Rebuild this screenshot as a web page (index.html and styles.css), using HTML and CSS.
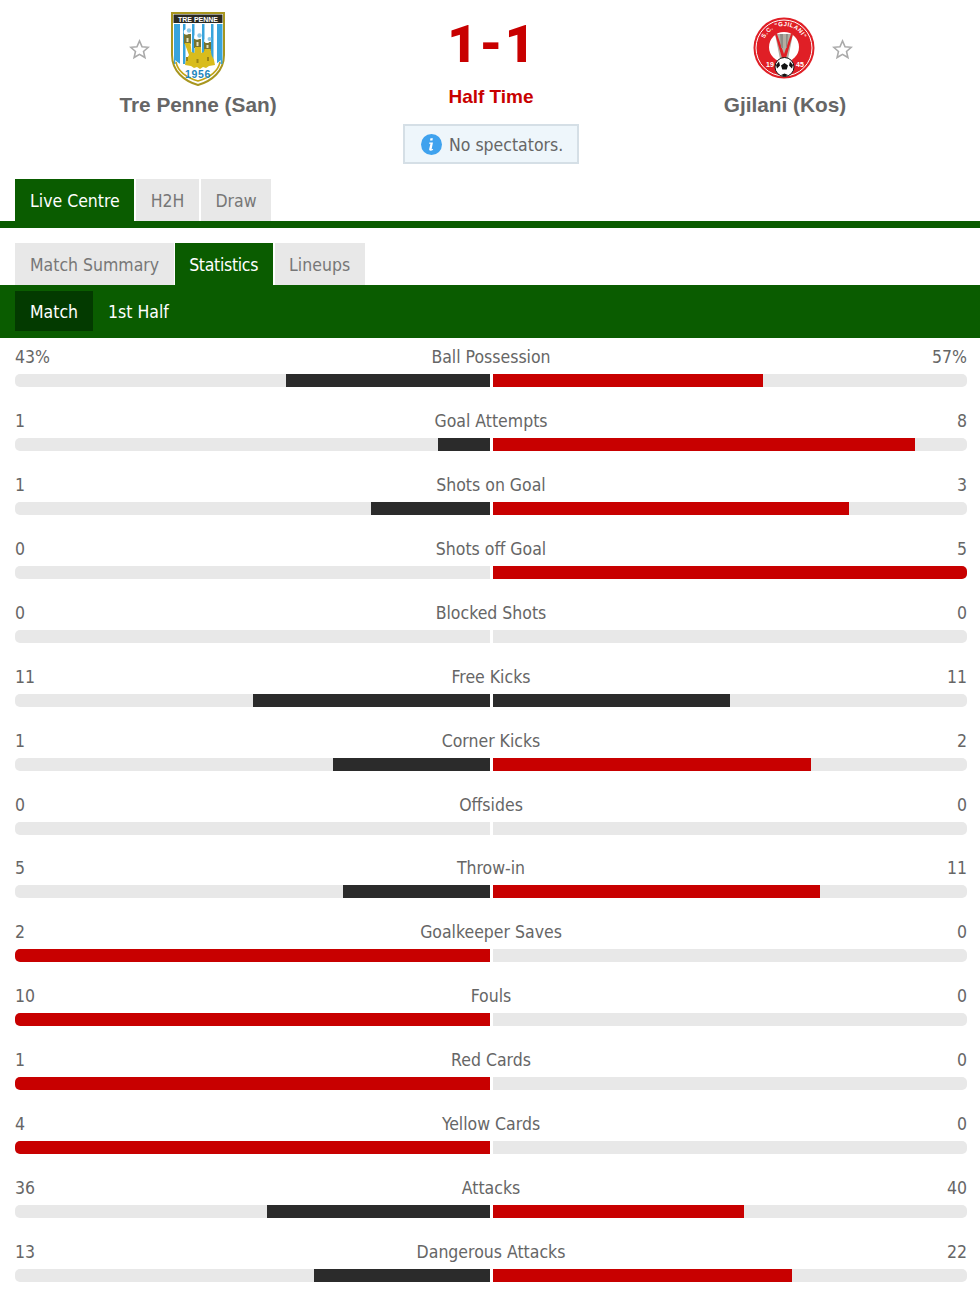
FILE: index.html
```html
<!DOCTYPE html>
<html lang="en">
<head>
<meta charset="utf-8">
<title>Tre Penne - Gjilani</title>
<link rel="stylesheet" href="styles.css">
</head>
<body>
<header class="match">
  <div class="team team-home">
    <div class="crest-row">
      <svg class="star" viewBox="0 0 24 24"><path d="M12 2.200l2.900 6.600 7.100.7-5.400 4.700 1.600 7-6.200-3.700-6.200 3.700 1.600-7L2 9.500l7.100-.7z"/></svg>
      <svg class="crest crest-home" viewBox="0 0 54 74">
        <path d="M1 1h52v42c0 16-12 26-26 30C13 69 1 59 1 43z" fill="#fff" stroke="#a8961f" stroke-width="2"/>
        <path d="M3 12h6v40H3zM12 12h2.500v40H12zM21 12h2.500v40H21zM31 12h2.500v40H31zM40 12h2.500v40H40zM46 12h5.500v40H46z" fill="#39a4dc"/>
        <path d="M2.500 11V2.500h49V11z" fill="#2b2a22"/>
        <text class="crest-title" x="27" y="9.500" text-anchor="middle">TRE PENNE</text>
        <path d="M4 48C10 54 18 56 27 56S44 54 50 48C49 60 38 67 27 70 16 67 5 60 4 48z" fill="#fff"/>
        <path d="M5 50C7 60 17 66 27 69 37 66 47 60 49 50" fill="none" stroke="#c2a414" stroke-width="1.500"/>
        <path d="M13 22h7v10h-7zM23 27h7v9h-7zM33 30h7v9h-7z" fill="#77732f"/>
        <path d="M13.500 31h6l1 9 3 1 .5-6h6l.5 6 2.500-1 .5-3h6l1 6 2.500 5 1 5-6 1-3 2-3-1-3 2-3-2-3 1-3-2-6-1 1-5 3-5z" fill="#d9bc1c"/>
        <path d="M15.500 26h2v4h-2zM25.500 30h2v4h-2zM35.500 33h2v3h-2z" fill="#e6e2c0"/>
        <path d="M15 45h2v4h-2zM25.500 47h2v4h-2zM36 45h2v4h-2z" fill="#9c8512"/>
        <circle cx="15.500" cy="20" r="2.800" fill="#fff"/><circle cx="18" cy="18.500" r="2.200" fill="#8fc9e6"/>
        <circle cx="26" cy="25" r="2.800" fill="#fff"/><circle cx="28.500" cy="23.500" r="2.200" fill="#8fc9e6"/>
        <circle cx="36" cy="28.500" r="2.600" fill="#fff"/><circle cx="38.500" cy="27" r="2" fill="#8fc9e6"/>
        <text class="crest-year" x="27" y="66" text-anchor="middle">1956</text>
      </svg>
    </div>
    <h2 class="team-name">Tre Penne (San)</h2>
  </div>
  <div class="centre">
    <div class="score"><span>1</span><span>-</span><span>1</span></div>
    <div class="status">Half Time</div>
    <div class="notice">
      <svg class="info" viewBox="0 0 20 20"><circle cx="10" cy="10" r="10" fill="#3fa2ee"/><path d="M11.300 4h-2.300l-.4 2.300h2.300zM8 8l-.3 1.200h1.300l-1.200 5.200c-.2 1 .4 1.600 1.300 1.600.9 0 1.700-.3 2.500-1l-.3-.9c-.5.3-.9.5-1.200.5l1.300-6.600z" fill="#fff"/></svg>
      <span>No spectators.</span>
    </div>
  </div>
  <div class="team team-away">
    <div class="crest-row">
      <svg class="crest crest-away" viewBox="0 0 62 62">
        <circle cx="31" cy="31" r="30.500" fill="#e01f26"/>
        <circle cx="31" cy="31" r="28" fill="none" stroke="#fff" stroke-width="1"/>
        <circle cx="31" cy="30" r="15" fill="#fff"/>
        <path id="ring" d="M10 30a21 21 0 0 1 42 0" fill="none"/>
        <text class="crest-ring"><textPath href="#ring" startOffset="50%" text-anchor="middle">S.C. "GJILANI"</textPath></text>
        <text class="crest-year-away" x="13" y="50">19</text><text class="crest-year-away" x="43" y="50">45</text>
        <path d="M22 17h18l-5 25h-8z" fill="#b3aea2"/>
        <path d="M22 17h2l7 20 7-20h2l-7 24h-4z" fill="#e01f26"/>
        <path d="M27 17h3v14h-2zM33 17h2l-1 14h-1z" fill="#8d8d86"/>
        <circle cx="31.500" cy="50" r="9.500" fill="#fff" stroke="#111" stroke-width="1"/>
        <path d="M31.500 46l3.500 2.500-1.300 4h-4.400l-1.300-4zM23 48l3-3.500 1 4-3 3zM40 48l-3-3.500-1 4 3 3zM28 58l3.500-1.500 3.500 1.500-3.500 1.500z" fill="#111"/>
      </svg>
      <svg class="star" viewBox="0 0 24 24"><path d="M12 2.200l2.900 6.600 7.100.7-5.400 4.700 1.600 7-6.200-3.700-6.200 3.700 1.600-7L2 9.500l7.100-.7z"/></svg>
    </div>
    <h2 class="team-name">Gjilani (Kos)</h2>
  </div>
</header>

<nav class="tabs main-tabs">
  <a class="tab active">Live Centre</a>
  <a class="tab">H2H</a>
  <a class="tab">Draw</a>
</nav>
<nav class="tabs sub-tabs">
  <a class="tab">Match Summary</a>
  <a class="tab active tight">Statistics</a>
  <a class="tab">Lineups</a>
</nav>
<div class="period-bar">
  <a class="period active">Match</a>
  <a class="period">1st Half</a>
</div>

<section class="stats">
  <div class="stat"><div class="stat-head"><span>43%</span><span>Ball Possession</span><span>57%</span></div><div class="bars"><div class="track left"><i class="fill dark" style="width:43%"></i></div><div class="track right"><i class="fill red" style="width:57%"></i></div></div></div>
  <div class="stat"><div class="stat-head"><span>1</span><span>Goal Attempts</span><span>8</span></div><div class="bars"><div class="track left"><i class="fill dark" style="width:11%"></i></div><div class="track right"><i class="fill red" style="width:89%"></i></div></div></div>
  <div class="stat"><div class="stat-head"><span>1</span><span>Shots on Goal</span><span>3</span></div><div class="bars"><div class="track left"><i class="fill dark" style="width:25%"></i></div><div class="track right"><i class="fill red" style="width:75%"></i></div></div></div>
  <div class="stat"><div class="stat-head"><span>0</span><span>Shots off Goal</span><span>5</span></div><div class="bars"><div class="track left"></div><div class="track right"><i class="fill red" style="width:100%"></i></div></div></div>
  <div class="stat"><div class="stat-head"><span>0</span><span>Blocked Shots</span><span>0</span></div><div class="bars"><div class="track left"></div><div class="track right"></div></div></div>
  <div class="stat"><div class="stat-head"><span>11</span><span>Free Kicks</span><span>11</span></div><div class="bars"><div class="track left"><i class="fill dark" style="width:50%"></i></div><div class="track right"><i class="fill dark" style="width:50%"></i></div></div></div>
  <div class="stat"><div class="stat-head"><span>1</span><span>Corner Kicks</span><span>2</span></div><div class="bars"><div class="track left"><i class="fill dark" style="width:33%"></i></div><div class="track right"><i class="fill red" style="width:67%"></i></div></div></div>
  <div class="stat"><div class="stat-head"><span>0</span><span>Offsides</span><span>0</span></div><div class="bars"><div class="track left"></div><div class="track right"></div></div></div>
  <div class="stat"><div class="stat-head"><span>5</span><span>Throw-in</span><span>11</span></div><div class="bars"><div class="track left"><i class="fill dark" style="width:31%"></i></div><div class="track right"><i class="fill red" style="width:69%"></i></div></div></div>
  <div class="stat"><div class="stat-head"><span>2</span><span>Goalkeeper Saves</span><span>0</span></div><div class="bars"><div class="track left"><i class="fill red" style="width:100%"></i></div><div class="track right"></div></div></div>
  <div class="stat"><div class="stat-head"><span>10</span><span>Fouls</span><span>0</span></div><div class="bars"><div class="track left"><i class="fill red" style="width:100%"></i></div><div class="track right"></div></div></div>
  <div class="stat"><div class="stat-head"><span>1</span><span>Red Cards</span><span>0</span></div><div class="bars"><div class="track left"><i class="fill red" style="width:100%"></i></div><div class="track right"></div></div></div>
  <div class="stat"><div class="stat-head"><span>4</span><span>Yellow Cards</span><span>0</span></div><div class="bars"><div class="track left"><i class="fill red" style="width:100%"></i></div><div class="track right"></div></div></div>
  <div class="stat"><div class="stat-head"><span>36</span><span>Attacks</span><span>40</span></div><div class="bars"><div class="track left"><i class="fill dark" style="width:47%"></i></div><div class="track right"><i class="fill red" style="width:53%"></i></div></div></div>
  <div class="stat"><div class="stat-head"><span>13</span><span>Dangerous Attacks</span><span>22</span></div><div class="bars"><div class="track left"><i class="fill dark" style="width:37%"></i></div><div class="track right"><i class="fill red" style="width:63%"></i></div></div></div>
</section>
</body>
</html>
```
FILE: styles.css
```css
* { box-sizing: border-box; }
html, body { margin: 0; padding: 0; background: #fff; }
body {
  font-family: "DejaVu Sans", "Liberation Sans", sans-serif;
  font-stretch: condensed;
  font-size: 17.5px;
  color: #666;
  overflow: hidden;
}
.match {
  display: grid;
  grid-template-columns: 396px 190px 1fr;
  height: 179px;
}
.team { display: flex; flex-direction: column; align-items: center; }
.team-away { padding-left: 4px; }
.crest-row {
  width: 100%;
  height: 92px;
  display: grid;
  align-items: center;
}
.team-home .crest-row { grid-template-columns: 1fr 54px 1fr; padding-top: 5px; column-gap: 21px; }
.team-away .crest-row { grid-template-columns: 1fr 62px 1fr; padding-top: 4px; column-gap: 17px; }
.team-home .star { grid-column: 1; justify-self: end; margin-top: 2px; }
.team-away .star { margin-top: 2px; margin-left: -1px; }
.team-away .crest { grid-column: 2; margin-left: -1px; }
.crest-home { width: 54px; height: 74px; }
.crest-away { width: 62px; height: 62px; }
.star { width: 21px; height: 21px; fill: #fff; stroke: #aaa; stroke-width: 1.800; }
.crest-title { font: bold 7px "Liberation Sans", sans-serif; fill: #fff; }
.crest-year { font: bold 10.500px "Liberation Sans", sans-serif; fill: #1f86bd; letter-spacing: .6px; }
.crest-ring { font: bold 6px "Liberation Sans", sans-serif; fill: #fff; letter-spacing: .4px; }
.crest-year-away { font: bold 7px "Liberation Sans", sans-serif; fill: #fff; }
.team-name {
  margin: 0;
  font: bold 20.800px/26px "Liberation Sans", sans-serif;
  color: #666;
}
.centre { display: flex; flex-direction: column; align-items: center; }
.score {
  display: flex;
  gap: 2px;
  margin-top: 16px;
  height: 58px;
  font: 900 52px/58px Roboto, "Liberation Sans", sans-serif;
  color: #c80000;
}
.status {
  margin-top: 10px;
  font: bold 19px/26px "Liberation Sans", sans-serif;
  color: #c80000;
}
.notice {
  display: flex;
  align-items: center;
  gap: 7px;
  width: 176px;
  height: 40px;
  margin-top: 14px;
  padding: 2px 0 0 16px;
  background: #eef6fb;
  border: 2px solid #d5dfe6;
  white-space: nowrap;
}
.info { width: 21px; height: 21px; flex: none; margin-top: -2px; }
.tabs { display: flex; padding-left: 15px; }
.main-tabs { height: 49px; border-bottom: 7px solid #0a5c00; gap: 2px; }
.sub-tabs { height: 42px; margin-top: 15px; gap: 1px; }
.tab {
  display: flex;
  align-items: center;
  padding: 1px 14.500px 0;
  background: #e8e8e8;
  color: #777;
  white-space: nowrap;
}
.tab:first-child { padding-left: 15px; }
.tab.active { background: #0a5c00; color: #fff; }
.tab.tight { letter-spacing: -.3px; margin-right: 1px; }
.period-bar {
  display: flex;
  align-items: center;
  height: 53px;
  padding: 0 0 1px 15px;
  background: #0a5c00;
  color: #fff;
}
.period { display: flex; align-items: center; height: 40px; padding: 2px 15px 0; }
.period.active { background: #033a00; }
.stats { padding-top: .3px; }
.stat { margin-bottom: 14.900px; }
.stat-head {
  display: grid;
  grid-template-columns: 1fr auto 1fr;
  align-items: center;
  height: 36px;
  padding: 2px 13px 0 15px;
}
.stat-head span:last-child { text-align: right; }
.bars { display: grid; grid-template-columns: 475px 474px; gap: 3px; padding: 0 13px 0 15px; }
.track { display: flex; height: 13px; background: #e8e8e8; overflow: hidden; }
.track.left { justify-content: flex-end; border-radius: 5px 0 0 5px; }
.track.right { border-radius: 0 5px 5px 0; }
.fill { display: block; height: 100%; }
.fill.dark { background: #2b2b2b; }
.fill.red { background: #c80000; }
```
